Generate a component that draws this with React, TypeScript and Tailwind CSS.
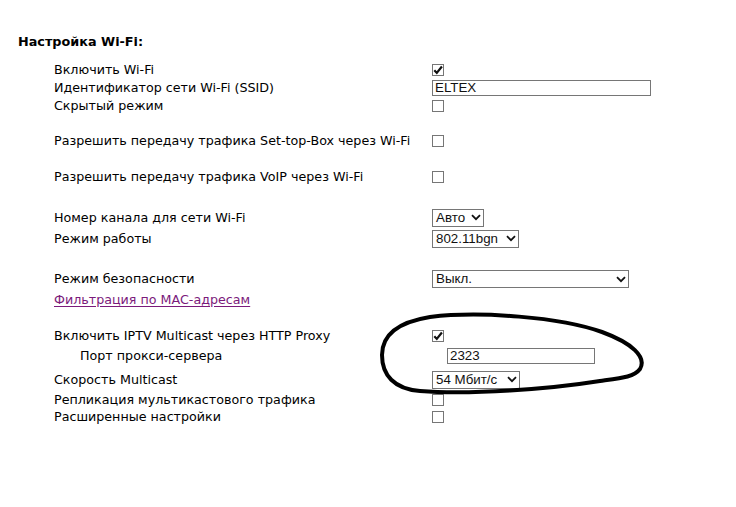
import React from 'react';

type Row =
  | { kind: 'check'; label: string; h: number; checked?: boolean }
  | { kind: 'text'; label: string; h: number; value: string; w: number; indent?: boolean }
  | { kind: 'select'; label: string; h: number; value: string; w: number }
  | { kind: 'link'; label: string; h: number }
  | { kind: 'gap'; h: number };

const rows: Row[] = [
  { kind: 'check', label: 'Включить Wi-Fi', h: 18, checked: true },
  { kind: 'text', label: 'Идентификатор сети Wi-Fi (SSID)', h: 17, value: 'ELTEX', w: 219 },
  { kind: 'check', label: 'Скрытый режим', h: 20 },
  { kind: 'gap', h: 15 },
  { kind: 'check', label: 'Разрешить передачу трафика Set-top-Box через Wi-Fi', h: 20 },
  { kind: 'gap', h: 16 },
  { kind: 'check', label: 'Разрешить передачу трафика VoIP через Wi-Fi', h: 20 },
  { kind: 'gap', h: 20 },
  { kind: 'select', label: 'Номер канала для сети Wi-Fi', h: 21, value: 'Авто', w: 52 },
  { kind: 'select', label: 'Режим работы', h: 21, value: '802.11bgn', w: 87 },
  { kind: 'gap', h: 20 },
  { kind: 'select', label: 'Режим безопасности', h: 20, value: 'Выкл.', w: 197 },
  { kind: 'link', label: 'Фильтрация по MAC-адресам', h: 22 },
  { kind: 'gap', h: 15 },
  { kind: 'check', label: 'Включить IPTV Multicast через HTTP Proxy', h: 20, checked: true },
  { kind: 'text', label: 'Порт прокси-сервера', h: 20, value: '2323', w: 148, indent: true },
  { kind: 'select', label: 'Скорость Multicast', h: 27, value: '54 Мбит/с', w: 88 },
  { kind: 'check', label: 'Репликация мультикастового трафика', h: 13 },
  { kind: 'check', label: 'Расширенные настройки', h: 22 },
];

function Checkbox({ checked }: { checked?: boolean }) {
  return (
    <div className="w-[12px] h-[12px] border border-[#767676] bg-white relative">
      {checked && (
        <svg className="absolute -left-px -top-px" width="12" height="12" viewBox="0 0 12 12">
          <path d="M2.3 6.2 L4.8 8.9 L9.9 2.5" fill="none" stroke="#111" strokeWidth="2.2" />
        </svg>
      )}
    </div>
  );
}

function Chevron() {
  return (
    <svg width="10" height="7" viewBox="0 0 10 7">
      <path d="M1 1.2 L5 5.2 L9 1.2" fill="none" stroke="#111" strokeWidth="1.8" />
    </svg>
  );
}

export default function App() {
  const ctrlFont = "font-['Liberation_Sans',Arial,sans-serif] text-[13.33px] text-[#111]";
  return (
    <div className="relative w-[736px] h-[507px] bg-white text-black font-['Verdana','DejaVu_Sans',sans-serif] text-[12.7px]">
      <div className="pt-[34px] pl-[18px] h-[50px] leading-[16px] font-bold text-[12.8px]">Настройка Wi-Fi:</div>
      <div className="mt-[11px] pl-[54px]">
        {rows.map((r, i) => {
          if (r.kind === 'gap') return <div key={i} style={{ height: r.h }} />;
          return (
            <div key={i} className="flex items-center" style={{ height: r.h }}>
              <div className={`w-[378px] shrink-0 leading-[16px] whitespace-nowrap ${r.kind === 'text' && r.indent ? 'pl-[26px]' : ''}`}>
                {r.kind === 'link' ? (
                  <span className="text-[#7b1a7b] underline underline-offset-[2px]">{r.label}</span>
                ) : (
                  r.label
                )}
              </div>
              {r.kind === 'check' && <Checkbox checked={r.checked} />}
              {r.kind === 'text' && (
                <div
                  className={`h-[16px] border border-[#767676] bg-white flex items-center pl-[2px] leading-none ${ctrlFont} ${r.indent ? 'ml-[15px]' : ''}`}
                  style={{ width: r.w }}
                >
                  {r.value}
                </div>
              )}
              {r.kind === 'select' && (
                <div
                  className={`h-[18px] border border-[#767676] bg-white flex items-center justify-between pl-[3px] pr-[2px] leading-none ${ctrlFont}`}
                  style={{ width: r.w }}
                >
                  <span>{r.value}</span>
                  <Chevron />
                </div>
              )}
            </div>
          );
        })}
      </div>
      <svg className="absolute left-0 top-0 pointer-events-none" width="736" height="507" viewBox="0 0 736 507">
        <path
          d="M600 381 C550 389 470 395 420 391 C394 389 382 375 382 355 C382 334 399 322 430 317 C480 311 560 317 602 332 C632 343 647 357 640 369 C634 377 622 378 600 381 Z"
          fill="none"
          stroke="#000"
          strokeWidth="4"
          strokeLinecap="round"
          strokeLinejoin="round"
        />
      </svg>
    </div>
  );
}
